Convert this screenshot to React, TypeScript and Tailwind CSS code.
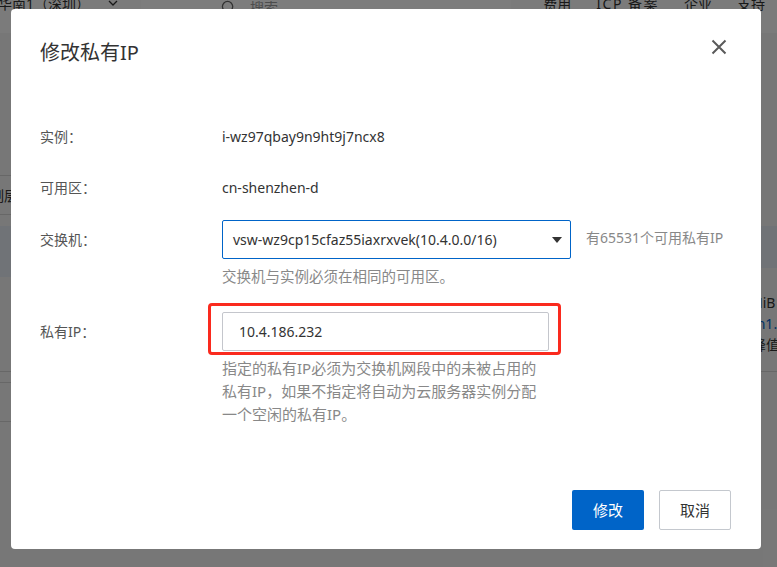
const font = "font-['Noto_Sans','Noto_Sans_CJK_SC',sans-serif]";

function PageHeader() {
  return (
    <div className="flex h-[33px] items-start bg-[#f7f7f7] text-[14px] text-[#333]">
      <div className="-mt-[9px] flex h-[24px] items-center gap-[20px]">
        <span className="-ml-[2px] whitespace-nowrap">华南1（深圳）</span>
        <svg width="10" height="6" viewBox="0 0 10 6" className="-ml-[2px]">
          <path d="M1 1l4 4 4-4" fill="none" stroke="#333" strokeWidth="1.3" />
        </svg>
      </div>
      <div className="-mt-[9px] ml-[23px] flex h-[33px] w-[370px] items-center gap-[14px] bg-[#fbfbfb] pl-[80px] text-[#999]">
        <svg width="15" height="15" viewBox="0 0 16 16">
          <circle cx="7" cy="7" r="5.5" fill="none" stroke="#666" strokeWidth="1.4" />
          <path d="M11 11l4 4" stroke="#666" strokeWidth="1.4" />
        </svg>
        <span>搜索...</span>
      </div>
      <div className="-mt-[9px] ml-auto flex h-[24px] items-center gap-[25px] whitespace-nowrap pr-[12px]">
        <span>费用</span>
        <span className="tracking-[1.5px]">ICP 备案</span>
        <span>企业</span>
        <span>支持</span>
      </div>
    </div>
  );
}

function PageBody() {
  return (
    <div className="flex text-[14px] text-[#333]">
      <div className="w-[40px]">
        <div className="h-[143px] border-b border-[#cfcfcf]" />
        <div className="flex h-[39px] items-center border-b border-[#cfcfcf]">
          <span className="-ml-[10px] whitespace-nowrap">制层</span>
        </div>
        <div className="h-[11px]" />
        <div className="h-[51px] bg-[#e1e6ee]" />
        <div className="h-[95px] border-b border-[#cfcfcf]" />
        <div className="h-[11px] border-b border-[#cfcfcf]" />
        <div className="h-[39px] border-b border-[#cfcfcf]" />
      </div>
      <div className="flex-1" />
      <div className="w-[40px]">
        <div className="h-[193px]" />
        <div className="h-[42px] bg-[#e1e6ee]" />
        <div className="flex h-[104px] flex-col justify-end whitespace-nowrap border-b border-[#cfcfcf] pb-[16px] pl-[13px] leading-[21px]">
          <span>MiB</span>
          <span className="text-[#0064c8]">cn1.s</span>
          <span className="ml-[2px]">峰值</span>
        </div>
      </div>
    </div>
  );
}

function Row({ label, children }: { label: string; children: React.ReactNode }) {
  return (
    <div className="flex">
      <div className="w-[182px] shrink-0 text-[#555]">{label}</div>
      <div className="flex-1">{children}</div>
    </div>
  );
}

function Dialog() {
  return (
    <div className="absolute left-[11px] top-[9px] flex h-[540px] w-[750px] flex-col rounded-[4px] bg-white text-[14px] text-[#333]">
      <div className="flex items-start px-[29px] pt-[30px]">
        <h2 className="text-[20px] leading-[28px] text-[#333]">修改私有IP</h2>
        <button className="ml-auto mr-[5px]">
          <svg width="16" height="16" viewBox="0 0 16 16">
            <path d="M1.5 1.5l13 13M14.5 1.5l-13 13" stroke="#5a5a5a" strokeWidth="2" />
          </svg>
        </button>
      </div>

      <div className="px-[29px] pt-[60px] leading-[20px]">
        <Row label="实例：">i-wz97qbay9n9ht9j7ncx8</Row>
        <div className="mt-[31px]">
          <Row label="可用区：">cn-shenzhen-d</Row>
        </div>

        <div className="mt-[22px] flex">
          <div className="flex h-[39px] w-[182px] shrink-0 items-center text-[#555]">交换机：</div>
          <div>
            <div className="flex items-center">
              <div className="flex h-[39px] w-[349px] items-center justify-between rounded-[2px] border border-[#0064c8] pl-[10px] pr-[8px]">
                <span>vsw-wz9cp15cfaz55iaxrxvek(10.4.0.0/16)</span>
                <svg width="10" height="6" viewBox="0 0 10 6">
                  <path d="M0 0h10L5 6z" fill="#333" />
                </svg>
              </div>
              <span className="ml-[15px] -mt-[4px] text-[#888]">有65531个可用私有IP</span>
            </div>
            <p className="mt-[7px] text-[14.5px] text-[#888]">交换机与实例必须在相同的可用区。</p>
          </div>
        </div>

        <div className="mt-[26px] flex">
          <div className="flex h-[39px] w-[182px] shrink-0 items-center text-[#555]">私有IP：</div>
          <div>
            <div className="relative w-[327px]">
              <div className="flex h-[39px] items-center rounded-[2px] border border-[#c4c6cc] pl-[16px]">
                10.4.186.232
              </div>
              <div className="pointer-events-none absolute -bottom-[4px] -left-[14px] -right-[12px] -top-[9px] rounded-[4px] border-[3px] border-[#fa2a1e]" />
            </div>
            <p className="mt-[6px] w-[318px] text-[15px] leading-[23px] text-[#888]">
              指定的私有IP必须为交换机网段中的未被占用的私有IP，如果不指定将自动为云服务器实例分配一个空闲的私有IP。
            </p>
          </div>
        </div>
      </div>

      <div className="mt-auto flex justify-end gap-[15px] pb-[19px] pr-[30px]">
        <button className="h-[40px] w-[72px] rounded-[2px] bg-[#0064c8] text-[15px] text-white">修改</button>
        <button className="h-[40px] w-[72px] rounded-[2px] border border-[#c4c8ce] bg-white text-[15px] text-[#333]">取消</button>
      </div>
    </div>
  );
}

export default function App() {
  return (
    <div className={`relative h-[567px] w-[777px] overflow-hidden bg-[#efefef] ${font}`}>
      <PageHeader />
      <PageBody />
      <div className="absolute inset-0 bg-black/50" />
      <Dialog />
    </div>
  );
}
